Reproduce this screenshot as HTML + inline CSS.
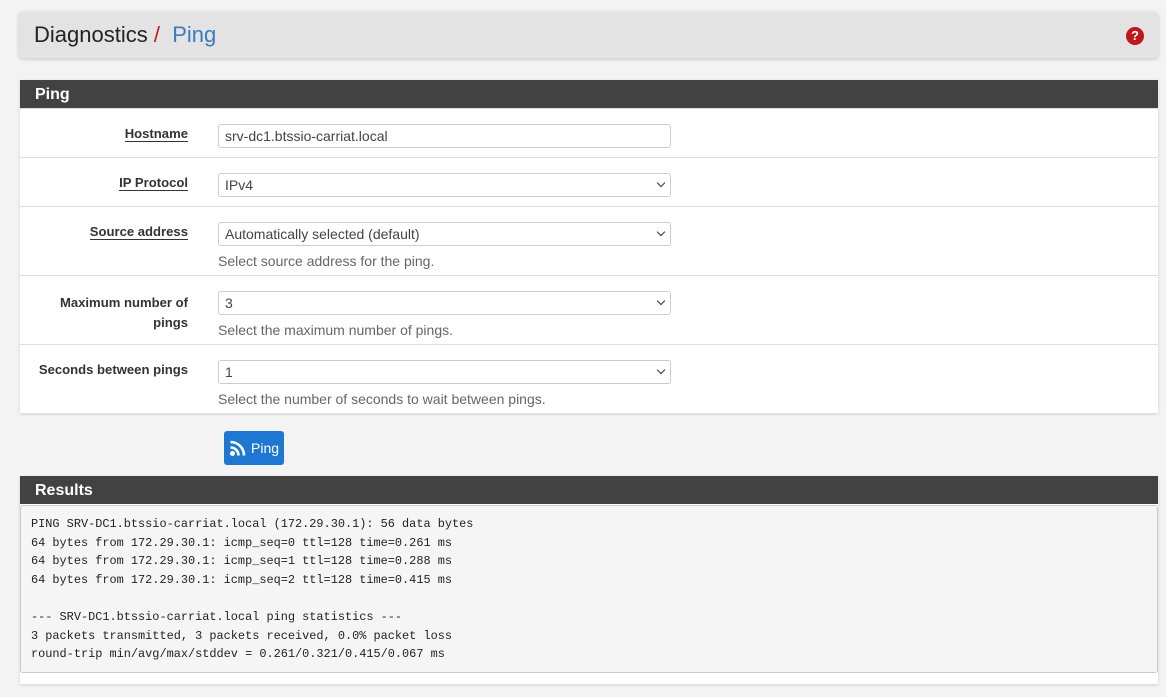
<!DOCTYPE html>
<html><head><style>
body{margin:0;background:#f3f3f3;font-family:"Liberation Sans",sans-serif;width:1166px;height:697px;overflow:hidden;position:relative}
.hdr{position:absolute;left:19px;top:12px;width:1139px;height:46px;background:#e3e3e3;border-radius:4px;box-shadow:0 1px 4px rgba(0,0,0,.2)}
.hdr .t{position:absolute;left:15px;top:10px;font-size:22px;color:#222}
.hdr .t .s{color:#b71c1c}.hdr .t .p{color:#3a7bbf}
.help{position:absolute;left:1107px;top:15px;width:18px;height:18px;border-radius:50%;background:#c0171c;color:#fff;font-weight:bold;font-size:13px;text-align:center;line-height:18px}
.panel{position:absolute;left:20px;width:1138px;background:#fff;box-shadow:0 1px 3px rgba(0,0,0,.15)}
.ph{height:28px;background:#424242;color:#fff;font-weight:bold;font-size:16px;line-height:29px;padding-left:15px}
.row{position:relative;border-top:1px solid #ddd}
.lbl{position:absolute;right:970px;text-align:right;font-weight:bold;font-size:13.1px;color:#333;width:160px}
.lbl u{text-decoration:none;border-bottom:1px solid #333}
.in{position:absolute;left:198px;width:445px;height:22px;border:1px solid #ccc;border-radius:3px;font-size:14px;color:#444;line-height:22px;padding-left:6px;box-sizing:content-box}
.in.sel::after{content:"";position:absolute;right:6px;top:6px;width:5px;height:5px;border-right:1.5px solid #333;border-bottom:1.5px solid #333;transform:rotate(45deg)}
.hint{position:absolute;left:198px;font-size:14px;color:#666}
.btn{position:absolute;left:224px;top:431px;width:60px;height:34px;background:#1e78d2;border-radius:3px;color:#fff;font-size:14px;line-height:34px}
pre{margin:0;position:absolute;left:0;top:29px;width:1138px;height:168px;background:#f5f5f5;border:1px solid #ccc;border-radius:3px;font-family:"Liberation Mono","DejaVu Sans Mono",monospace;font-size:11.9px;line-height:18.6px;padding:9px 0 0 10px;box-sizing:border-box;color:#222}
</style></head><body>
<div class="hdr"><div class="t">Diagnostics <span class="s">/</span>&nbsp; <span class="p">Ping</span></div><div class="help">?</div></div>
<div class="panel" style="top:80px;height:333px">
<div class="ph">Ping</div>
<div class="row" style="height:48px"><div class="lbl" style="top:17px"><u>Hostname</u></div><div class="in" style="top:15px">srv-dc1.btssio-carriat.local</div></div>
<div class="row" style="height:48px"><div class="lbl" style="top:17px"><u>IP Protocol</u></div><div class="in sel" style="top:15px">IPv4</div></div>
<div class="row" style="height:68px"><div class="lbl" style="top:17px"><u>Source address</u></div><div class="in sel" style="top:15px">Automatically selected (default)</div><div class="hint" style="top:46px">Select source address for the ping.</div></div>
<div class="row" style="height:68px"><div class="lbl" style="top:17px;line-height:20px">Maximum number of pings</div><div class="in sel" style="top:15px">3</div><div class="hint" style="top:46px">Select the maximum number of pings.</div></div>
<div class="row" style="height:68px"><div class="lbl" style="top:17px">Seconds between pings</div><div class="in sel" style="top:15px">1</div><div class="hint" style="top:46px">Select the number of seconds to wait between pings.</div></div>
</div>
<div class="btn"><svg width="18" height="18" viewBox="0 0 18 18" style="position:absolute;left:5px;top:8px"><circle cx="3.5" cy="14.5" r="2.5" fill="#fff"/><path d="M1.5 8.5a8 8 0 0 1 8 8M1.5 3a13.5 13.5 0 0 1 13.5 13.5" stroke="#fff" stroke-width="2.6" fill="none"/></svg><span style="position:absolute;left:27px">Ping</span></div>
<div class="panel" style="top:476px;height:208px">
<div class="ph">Results</div>
<pre>PING SRV-DC1.btssio-carriat.local (172.29.30.1): 56 data bytes
64 bytes from 172.29.30.1: icmp_seq=0 ttl=128 time=0.261 ms
64 bytes from 172.29.30.1: icmp_seq=1 ttl=128 time=0.288 ms
64 bytes from 172.29.30.1: icmp_seq=2 ttl=128 time=0.415 ms

--- SRV-DC1.btssio-carriat.local ping statistics ---
3 packets transmitted, 3 packets received, 0.0% packet loss
round-trip min/avg/max/stddev = 0.261/0.321/0.415/0.067 ms</pre>
</div>
</body></html>
